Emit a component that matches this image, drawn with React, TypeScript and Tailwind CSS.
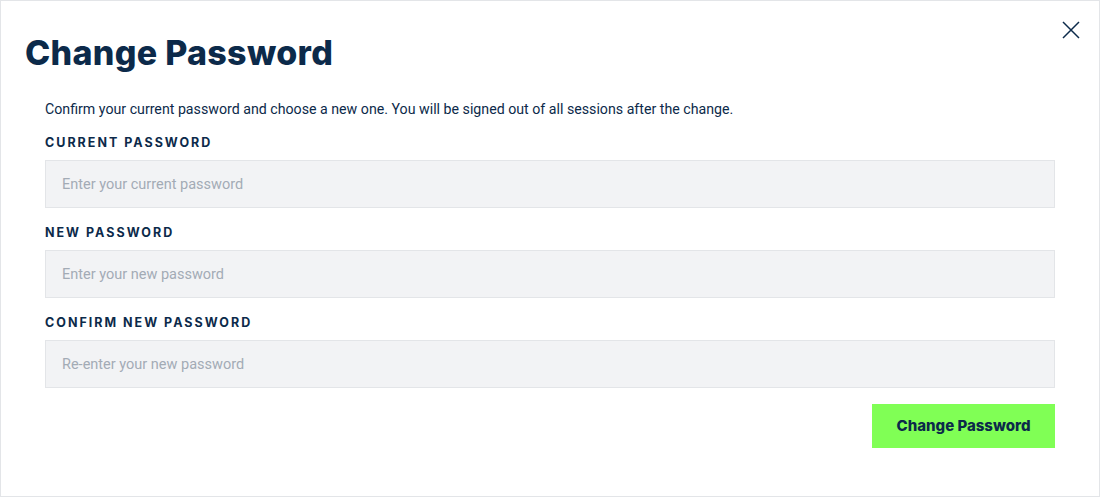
import { useState } from "react";

type Field = {
  id: string
  label: string
  placeholder: string
}

const fields: Field[] = [
  { id: "current", label: "Current Password", placeholder: "Enter your current password" },
  { id: "next", label: "New Password", placeholder: "Enter your new password" },
  { id: "confirm", label: "Confirm New Password", placeholder: "Re-enter your new password" },
];

export default function App() {
  const [values, setValues] = useState<Record<string, string>>({});

  return (
    <div className="w-[1100px] h-[497px] bg-white border border-[#e3e5e8] relative font-['Roboto',sans-serif] text-[#0c2a4a]">
      <button className="absolute top-[20px] right-[19px] w-[18px] h-[18px] text-[#0c2a4a]">
        <svg viewBox="0 0 18 18" width="18" height="18" fill="none" stroke="currentColor" strokeWidth="1.5">
          <path d="M1 1L17 17M17 1L1 17" />
        </svg>
      </button>

      <h1 className="pl-[24px] pt-[31px] text-[34px] leading-[42px] font-extrabold tracking-[0.3px] font-['Inter',sans-serif]">
        Change Password
      </h1>

      <div className="px-[44px] pt-[25px]">
        <p className="text-[14.2px] leading-[20px]">
          Confirm your current password and choose a new one. You will be signed out of all sessions after the change.
        </p>

        <div className="mt-[17px] flex flex-col gap-[18px]">
          {fields.map(field => (
            <div key={field.id} className="flex flex-col gap-[10px]">
              <label className="text-[12.5px] leading-[14px] font-bold uppercase tracking-[2px] font-['Inter',sans-serif]">
                {field.label}
              </label>
              <input
                type="password"
                placeholder={field.placeholder}
                value={values[field.id] ?? ""}
                onChange={e => setValues(prev => ({ ...prev, [field.id]: e.target.value }))}
                className="h-[48px] w-full bg-[#f2f3f5] border border-[#e3e5e8] px-[16px] text-[14.5px] outline-none placeholder:text-[#a3abb5]"
              />
            </div>
          ))}
        </div>

        <div className="flex justify-end mt-[16px]">
          <button className="w-[183px] h-[44px] bg-[#80ff55] text-[15px] font-extrabold text-[#0c2a4a] font-['Inter',sans-serif]">
            Change Password
          </button>
        </div>
      </div>
    </div>
  );
}
